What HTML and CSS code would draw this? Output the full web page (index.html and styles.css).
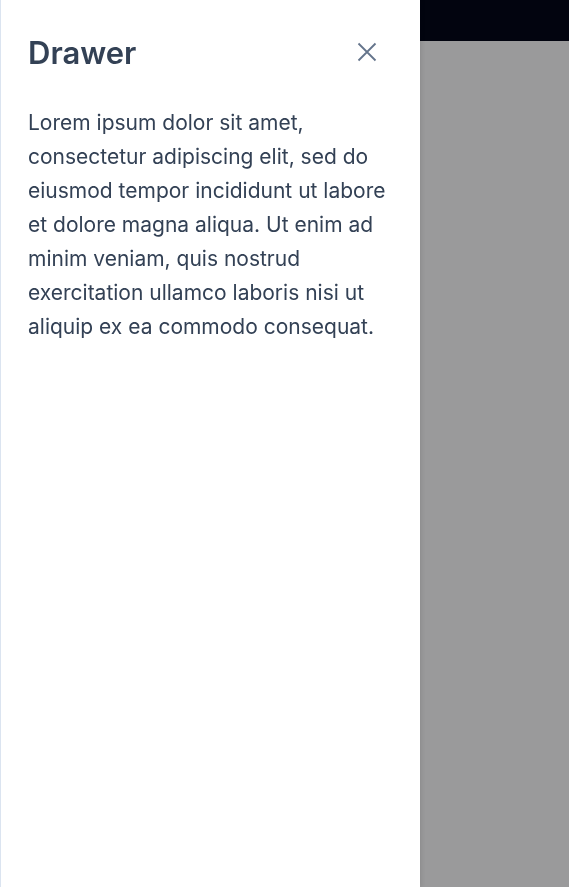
FILE: index.html
```html
<!DOCTYPE html>
<html>
<head>
<meta charset="utf-8">
<link rel="stylesheet" href="styles.css">
</head>
<body>
<div class="page">
  <header class="topbar"></header>
  <main class="content"></main>
</div>
<div class="overlay"></div>
<aside class="drawer">
  <div class="drawer-head">
    <h2 class="drawer-title">Drawer</h2>
    <button class="close" aria-label="Close">
      <svg width="20" height="20" viewBox="0 0 20 20"><path d="M1.5 1.5 L18.5 18.5 M18.5 1.5 L1.5 18.5" stroke="#64748b" stroke-width="1.8" fill="none"/></svg>
    </button>
  </div>
  <p class="drawer-text">Lorem ipsum dolor sit amet, consectetur adipiscing elit, sed do eiusmod tempor incididunt ut labore et dolore magna aliqua. Ut enim ad minim veniam, quis nostrud exercitation ullamco laboris nisi ut aliquip ex ea commodo consequat.</p>
</aside>
</body>
</html>
```
FILE: styles.css
```css
html, body { margin: 0; padding: 0; height: 100%; }
body { font-family: Inter, "Noto Sans", sans-serif; background: #fff; overflow: hidden; }
.page { display: flex; flex-direction: column; height: 100vh; }
.topbar { height: 41px; background: #020617; }
.content { flex: 1; background: #fff; }
.overlay { position: fixed; inset: 0; background: rgba(2, 3, 6, 0.4); }
.drawer {
  position: fixed; top: 0; left: 0; bottom: 0; width: 420px;
  background: #fff; border-left: 1px solid #dbe4f0;
  box-shadow: 2px 0 4px rgba(0,0,0,0.08);
  padding: 0 33px 0 27px; box-sizing: border-box;
}
.drawer-head { display: flex; align-items: center; justify-content: space-between; height: 105px; }
.drawer-title { margin: 0; font-size: 31px; font-weight: 600; color: #334155; }
.close { background: none; border: 0; padding: 0; width: 20px; height: 20px; cursor: pointer; display: flex; margin-right: 10px; margin-bottom: 1px; }
.drawer-text { margin: 1px 0 0; font-size: 21px; line-height: 34px; color: #334155; }
```
